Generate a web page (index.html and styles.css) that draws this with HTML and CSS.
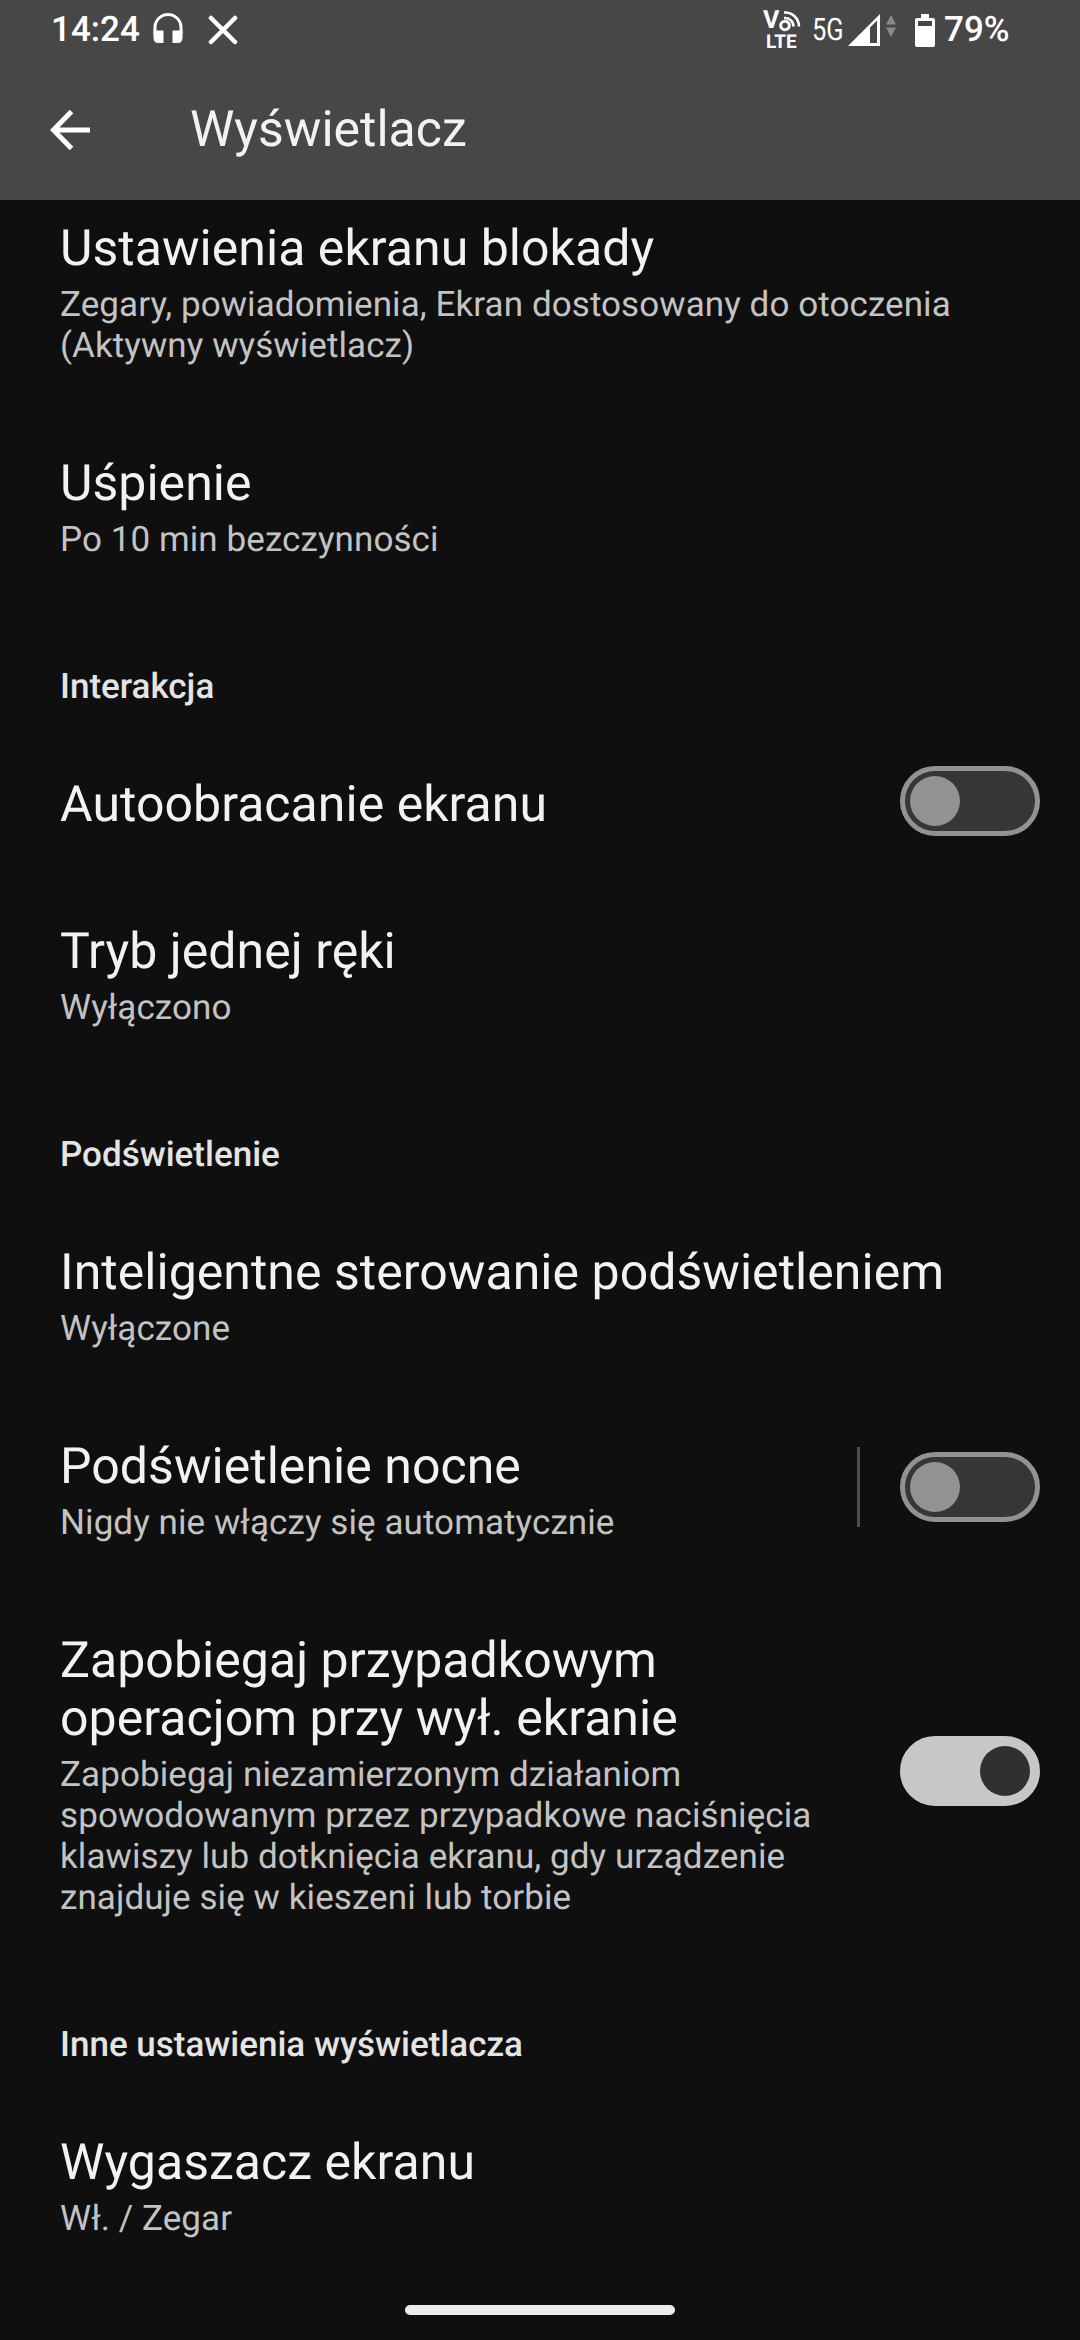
FILE: index.html
```html
<!DOCTYPE html>
<html lang="pl">
<head>
    <meta charset="UTF-8">
    <meta name="viewport" content="width=device-width, initial-scale=1.0">
    <title>Wyświetlacz</title>
    <link rel="stylesheet" href="styles.css">
</head>
<body>
    <header class="header">
        <div class="status-bar">
            <span class="clock">14:24</span>
            <svg class="icon-headphones" width="30" height="31" viewBox="0 0 30 31">
                <path d="M2 21V14.500a13 13 0 0 1 26 0V21" fill="none" stroke="#fff" stroke-width="3"/>
                <path d="M.5 17.500h10V30H5a4.500 4.500 0 0 1-4.500-4.500zM19.500 17.500h10v8A4.500 4.500 0 0 1 25 30h-5.500z" fill="#fff"/>
            </svg>
            <svg class="icon-close" width="30" height="30" viewBox="0 0 30 30">
                <path d="M3 3l24 24M27 3L3 27" stroke="#fff" stroke-width="4.500" stroke-linecap="round"/>
            </svg>
            <div class="status-right">
                <div class="volte">
                    <svg width="38" height="21" viewBox="0 0 38 21">
                        <circle cx="22" cy="14.500" r="4.300" fill="none" stroke="#fff" stroke-width="3"/>
                        <path d="M21 7a8.500 8.500 0 0 1 9.500 8.500M21 1.500a14 14 0 0 1 15 14" fill="none" stroke="#fff" stroke-width="2.500"/>
                    </svg>
                    <span class="volte-v">V</span>
                    <span class="volte-lte">LTE</span>
                </div>
                <span class="network">5G</span>
                <svg class="icon-signal" width="32" height="32" viewBox="0 0 32 32">
                    <path d="M0 32L32 0v32zM22 13.500V29h7V6.500z" fill="#fff" fill-rule="evenodd"/>
                </svg>
                <svg class="icon-data" width="10" height="22" viewBox="0 0 10 22">
                    <path d="M0 9.500L5 0l5 9.500zM0 12.500h10L5 22z" fill="#8a8a8a"/>
                </svg>
                <svg class="icon-battery" width="20" height="33" viewBox="0 0 20 33">
                    <path d="M6 0h8v4h4a2 2 0 0 1 2 2v25a2 2 0 0 1-2 2H2a2 2 0 0 1-2-2V6a2 2 0 0 1 2-2h4zM3 7v5h14V7z" fill="#fff" fill-rule="evenodd"/>
                </svg>
                <span class="battery">79%</span>
            </div>
        </div>
        <div class="toolbar">
            <svg width="40" height="40" viewBox="0 0 40 40">
                <path d="M21.500 1.500L3.500 20l18 18.500M4 20h36" fill="none" stroke="#fff" stroke-width="5"/>
            </svg>
            <h1>Wyświetlacz</h1>
        </div>
    </header>

    <main class="settings">
        <div class="row row-first">
            <div class="text">
                <div class="title">Ustawienia ekranu blokady</div>
                <div class="summary">Zegary, powiadomienia, Ekran dostosowany do otoczenia<br>(Aktywny wyświetlacz)</div>
            </div>
        </div>
        <div class="row">
            <div class="text">
                <div class="title">Uśpienie</div>
                <div class="summary">Po 10 min bezczynności</div>
            </div>
        </div>

        <h2>Interakcja</h2>
        <div class="row">
            <div class="text">
                <div class="title">Autoobracanie ekranu</div>
            </div>
            <div class="switch"><span class="thumb"></span></div>
        </div>
        <div class="row">
            <div class="text">
                <div class="title">Tryb jednej ręki</div>
                <div class="summary">Wyłączono</div>
            </div>
        </div>

        <h2>Podświetlenie</h2>
        <div class="row">
            <div class="text">
                <div class="title">Inteligentne sterowanie podświetleniem</div>
                <div class="summary">Wyłączone</div>
            </div>
        </div>
        <div class="row">
            <div class="text">
                <div class="title">Podświetlenie nocne</div>
                <div class="summary">Nigdy nie włączy się automatycznie</div>
            </div>
            <div class="divider"></div>
            <div class="switch"><span class="thumb"></span></div>
        </div>
        <div class="row">
            <div class="text">
                <div class="title">Zapobiegaj przypadkowym<br>operacjom przy wył. ekranie</div>
                <div class="summary">Zapobiegaj niezamierzonym działaniom<br>spowodowanym przez przypadkowe naciśnięcia<br>klawiszy lub dotknięcia ekranu, gdy urządzenie<br>znajduje się w kieszeni lub torbie</div>
            </div>
            <div class="switch on"><span class="thumb"></span></div>
        </div>

        <h2>Inne ustawienia wyświetlacza</h2>
        <div class="row">
            <div class="text">
                <div class="title">Wygaszacz ekranu</div>
                <div class="summary">Wł. / Zegar</div>
            </div>
        </div>
    </main>

    <div class="home-bar"></div>
</body>
</html>
```
FILE: styles.css
```css
* {
    box-sizing: border-box;
}

body {
    margin: 0;
    height: 2340px;
    display: flex;
    flex-direction: column;
    overflow: hidden;
    font-family: Roboto, sans-serif;
    text-rendering: geometricPrecision;
    background-color: #0f0f0f;
    color: #f2f2f2;
}

svg {
    display: block;
    flex: none;
}

/* Status bar and toolbar */
.header {
    height: 200px;
    flex: none;
    background-color: #474747;
}

.status-bar {
    display: flex;
    align-items: center;
    height: 60px;
    padding: 0 70px 0 51px;
    color: #ffffff;
}

.clock {
    width: 90px;
    font-size: 35px;
    font-weight: 500;
    line-height: 60px;
    white-space: nowrap;
}

.icon-headphones {
    margin: -4px 0 0 12px;
}

.icon-close {
    margin-left: 25px;
}

.status-right {
    display: flex;
    align-items: center;
    margin-left: auto;
}

.volte {
    position: relative;
    width: 38px;
    height: 38px;
}

.volte span {
    position: absolute;
    font-weight: 700;
}

.volte-v {
    left: 0;
    top: -3px;
    font-size: 25px;
    line-height: 25px;
}

.volte-lte {
    left: 3px;
    top: 21px;
    font-size: 19px;
    line-height: 20px;
}

/* Narrow 5G label */
.network {
    width: 32px;
    margin-left: 11px;
    font-size: 31px;
    line-height: 60px;
    transform: scaleX(0.82);
    transform-origin: left;
}

.icon-signal {
    margin-left: 4px;
}

.icon-data {
    margin: -8px 0 0 6px;
}

.icon-battery {
    margin-left: 19px;
}

.battery {
    width: 66px;
    margin-left: 9px;
    font-size: 35px;
    font-weight: 500;
    line-height: 60px;
}

.toolbar {
    display: flex;
    align-items: center;
    height: 140px;
    padding-left: 50px;
}

h1 {
    margin: 1px 0 0 100px;
    font-size: 50px;
    font-weight: 400;
    line-height: 59px;
}

/* Settings list */
.settings {
    flex: none;
}

.row {
    display: flex;
    align-items: center;
    padding: 40px 40px 40px 60px;
}

.row-first {
    padding-top: 12px;
}

.text {
    flex: 1;
    white-space: nowrap;
}

.title {
    padding: 8px 0 1px;
    font-size: 50px;
    line-height: 58px;
    letter-spacing: 0.04px;
}

.summary {
    padding: 5px 0 1px;
    font-size: 35px;
    line-height: 41px;
    letter-spacing: 0.08px;
    color: #c3c3c3;
}

h2 {
    height: 127px;
    margin: 0;
    padding: 65px 60px 0;
    font-size: 35px;
    font-weight: 500;
    line-height: 41px;
    color: #e4e4e4;
}

.divider {
    width: 3px;
    height: 80px;
    margin-right: 40px;
    background-color: #4d4d4d;
}

/* Negative margins keep the switch from stretching single-line rows */
.switch {
    display: flex;
    width: 140px;
    height: 70px;
    margin: -2px 0 -1px;
    padding: 5px;
    border: 5px solid #929292;
    border-radius: 35px;
    background-color: #363636;
}

.thumb {
    width: 50px;
    height: 50px;
    border-radius: 50%;
    background-color: #929292;
}

.switch.on {
    justify-content: flex-end;
    border-color: #c7c7c7;
    background-color: #c7c7c7;
}

.switch.on .thumb {
    background-color: #303030;
}

.home-bar {
    width: 270px;
    height: 10px;
    margin: auto auto 25px;
    border-radius: 5px;
    background-color: #ececec;
}
```
